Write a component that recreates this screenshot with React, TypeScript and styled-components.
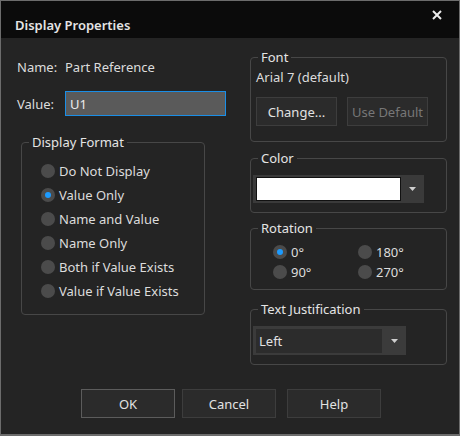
import React, { useState } from "react";
import styled, { createGlobalStyle } from "styled-components";

const GlobalStyle = createGlobalStyle`
  html, body {
    margin: 0;
    padding: 0;
    background: #242424;
  }
  body {
    font-family: "Noto Sans", "Open Sans", sans-serif;
    font-size: 13px;
    color: #dcdcdc;
  }
`;

const Window = styled.div`
  width: 460px;
  height: 436px;
  box-sizing: border-box;
  border: 1px solid #6c6c6c;
  border-bottom-width: 2px;
  background: #242424;
  display: flex;
  flex-direction: column;
`;

const TitleBar = styled.div`
  height: 37px;
  background: #0b0b0b;
  display: flex;
  align-items: center;
  justify-content: space-between;
  padding: 0 14px 0 14px;
  .title {
    font-size: 13px;
    font-weight: 600;
    color: #e4e4e4;
    margin-top: 10px;
  }
`;

const CloseButton = styled.div`
  width: 12px;
  height: 12px;
  margin-top: -10px;
  margin-right: 2px;
  display: flex;
`;

const Body = styled.div`
  flex: 1;
  display: flex;
  flex-direction: column;
`;

const Columns = styled.div`
  display: flex;
  padding-left: 16px;
`;

const LeftCol = styled.div`
  width: 209px;
  padding-top: 19px;
  display: flex;
  flex-direction: column;
`;

const RightCol = styled.div`
  width: 197px;
  margin-left: 24px;
  padding-top: 11px;
  display: flex;
  flex-direction: column;
`;

const FieldRow = styled.div<{ $mt?: number }>`
  display: flex;
  align-items: center;
  height: ${(p) => (p.$mt !== undefined ? 25 : 20)}px;
  margin-top: ${(p) => p.$mt || 0}px;
  .label {
    width: 48px;
  }
`;

const TextInput = styled.input`
  width: 161px;
  height: 25px;
  box-sizing: border-box;
  background: #5a5a5a;
  border: 1px solid #1a8ee6;
  color: #ececec;
  font-family: inherit;
  font-size: 13px;
  padding: 0 4px;
  outline: none;
`;

const Group = styled.fieldset<{ $mt?: number; $ml?: number; $w: number; $pad: string }>`
  margin: ${(p) => p.$mt || 0}px 0 0 ${(p) => p.$ml || 0}px;
  width: ${(p) => p.$w}px;
  padding: ${(p) => p.$pad};
  min-width: 0;
  border: 1px solid #474747;
  border-radius: 4px;
  box-sizing: border-box;
`;

const Legend = styled.legend`
  margin-left: 7px;
  padding: 0 3px;
  line-height: 16px;
  color: #e4e4e4;
`;

const Inner = styled.div<{ $pl: number }>`
  padding-left: ${(p) => p.$pl}px;
`;

const RadioList = styled.div`
  display: flex;
  flex-direction: column;
`;

const RadioGrid = styled.div`
  display: grid;
  grid-template-columns: 85px 85px;
`;

const RadioRow = styled.label<{ $h: number }>`
  display: flex;
  align-items: center;
  height: ${(p) => p.$h}px;
  gap: 4px;
  cursor: default;
`;

const RadioDot = styled.span<{ $on: boolean }>`
  width: 14px;
  height: 14px;
  border-radius: 50%;
  background: #4b4b4b;
  display: flex;
  align-items: center;
  justify-content: center;
  &::after {
    content: "";
    width: 6px;
    height: 6px;
    border-radius: 50%;
    background: ${(p) => (p.$on ? "#1c9bff" : "transparent")};
  }
`;

const FontName = styled.div`
  line-height: 16px;
`;

const ButtonPair = styled.div`
  display: flex;
  gap: 10px;
  margin-top: 12px;
`;

const Button = styled.button<{ $w: number; $default?: boolean; $disabled?: boolean }>`
  width: ${(p) => p.$w}px;
  height: 29px;
  box-sizing: border-box;
  background: #2b2b2b;
  border: 1px solid ${(p) => (p.$default ? "#5c5c5c" : "#3d3d3d")};
  color: ${(p) => (p.$disabled ? "#777777" : "#e2e2e2")};
  font-family: inherit;
  font-size: 13px;
  padding: 0;
  cursor: default;
`;

const ColorPicker = styled.div`
  width: 171px;
  height: 28px;
  background: #3a3a3a;
  display: flex;
  align-items: center;
  padding-left: 3px;
  box-sizing: border-box;
`;

const Swatch = styled.div<{ $color: string }>`
  width: 145px;
  height: 24px;
  box-sizing: border-box;
  background: ${(p) => p.$color};
  border: 1px solid #111;
`;

const Arrow = styled.div`
  flex: 1;
  display: flex;
  align-items: center;
  justify-content: center;
`;

const Select = styled.div`
  width: 153px;
  height: 29px;
  box-sizing: border-box;
  background: #3b3b3b;
  display: flex;
  align-items: center;
  padding-left: 3px;
`;

const SelectField = styled.div`
  width: 126px;
  height: 24px;
  background: #2c2c2c;
  display: flex;
  align-items: center;
  padding-left: 3px;
  box-sizing: border-box;
  color: #e2e2e2;
`;

const ButtonRow = styled.div`
  margin-top: auto;
  padding: 0 0 16px 2px;
  display: flex;
  justify-content: center;
  gap: 7px;
  .help {
    margin-left: 4px;
  }
`;

const DownArrow = () => (
  <svg width="7" height="4" viewBox="0 0 7 4">
    <path d="M0 0 L7 0 L3.5 4 Z" fill="#cfcfcf" />
  </svg>
);

const formats = [
  "Do Not Display",
  "Value Only",
  "Name and Value",
  "Name Only",
  "Both if Value Exists",
  "Value if Value Exists",
];

const rotations = ["0°", "180°", "90°", "270°"];

const App = () => {
  const [value, setValue] = useState("U1");
  const [format, setFormat] = useState(1);
  const [rotation, setRotation] = useState(0);

  return (
    <>
      <GlobalStyle />
      <Window>
        <TitleBar>
          <span className="title">Display Properties</span>
          <CloseButton>
            <svg width="12" height="12" viewBox="0 0 12 12">
              <path d="M2 2 L10 10 M10 2 L2 10" stroke="#ececec" strokeWidth="2" />
            </svg>
          </CloseButton>
        </TitleBar>
        <Body>
          <Columns>
            <LeftCol>
              <FieldRow>
                <span className="label">Name:</span>
                <span>Part Reference</span>
              </FieldRow>
              <FieldRow $mt={14}>
                <span className="label">Value:</span>
                <TextInput value={value} onChange={(e) => setValue(e.target.value)} />
              </FieldRow>
              <Group $mt={18} $ml={4} $w={184} $pad="9px 10px 11px 0">
                <Legend>Display Format</Legend>
                <Inner $pl={19}>
                  <RadioList>
                    {formats.map((f, i) => (
                      <RadioRow key={f} $h={24} onClick={() => setFormat(i)}>
                        <RadioDot $on={format === i} />
                        {f}
                      </RadioRow>
                    ))}
                  </RadioList>
                </Inner>
              </Group>
            </LeftCol>
            <RightCol>
              <Group $w={197} $pad="4px 5px 15px 0">
                <Legend>Font</Legend>
                <Inner $pl={5}>
                  <FontName>Arial 7 (default)</FontName>
                  <ButtonPair>
                    <Button $w={81}>Change...</Button>
                    <Button $w={81} $disabled>
                      Use Default
                    </Button>
                  </ButtonPair>
                </Inner>
              </Group>
              <Group $mt={8} $w={197} $pad="9px 3px 9px 0">
                <Legend>Color</Legend>
                <Inner $pl={2}>
                  <ColorPicker>
                    <Swatch $color="#ffffff" />
                    <Arrow>
                      <DownArrow />
                    </Arrow>
                  </ColorPicker>
                </Inner>
              </Group>
              <Group $mt={7} $w={197} $pad="6px 5px 7px 0">
                <Legend>Rotation</Legend>
                <Inner $pl={22}>
                  <RadioGrid>
                    {rotations.map((r, i) => (
                      <RadioRow key={r} $h={20} onClick={() => setRotation(i)}>
                        <RadioDot $on={rotation === i} />
                        {r}
                      </RadioRow>
                    ))}
                  </RadioGrid>
                </Inner>
              </Group>
              <Group $mt={11} $w={197} $pad="9px 3px 9px 0">
                <Legend>Text Justification</Legend>
                <Inner $pl={2}>
                  <Select>
                    <SelectField>Left</SelectField>
                    <Arrow>
                      <DownArrow />
                    </Arrow>
                  </Select>
                </Inner>
              </Group>
            </RightCol>
          </Columns>
          <ButtonRow>
            <Button $w={94} $default>
              OK
            </Button>
            <Button $w={94}>Cancel</Button>
            <Button $w={94} className="help">
              Help
            </Button>
          </ButtonRow>
        </Body>
      </Window>
    </>
  );
};

export default App;
